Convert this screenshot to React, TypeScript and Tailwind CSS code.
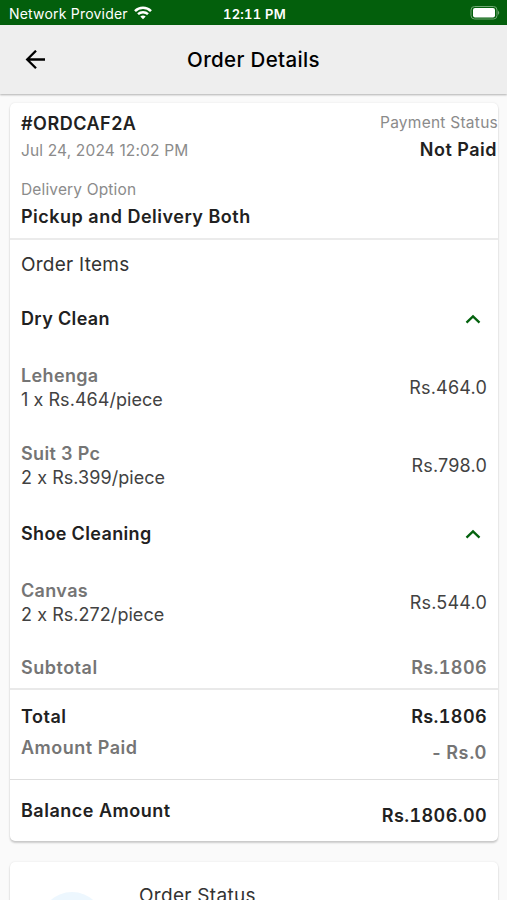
import type { ReactNode } from 'react';

type Item = { name: string; detail: string; price: string };

function StatusBar() {
  return (
    <div className="grid h-[25px] grid-cols-[1fr_auto_1fr] items-center bg-[#035f0c] pt-[3px] pr-[7px] pl-[9px] text-white">
      <div className="flex items-center gap-[6px]">
        <span className="text-[14px] leading-5 tracking-[0.2px] whitespace-nowrap">Network Provider</span>
        <svg className="-mt-[2px] h-[14px] w-[18px]" viewBox="0 0 18 14" fill="none" stroke="currentColor" strokeWidth="2.5">
          <path d="M1 5.1 C5.4 .7 12.6 .7 17 5.1" />
          <path d="M4 8.2 C6.8 5.6 11.2 5.6 14 8.2" />
          <path d="M6.3 10.5 Q9 8.3 11.7 10.5 L9 13.2 Z" fill="currentColor" stroke="none" />
        </svg>
      </div>
      <span className="text-[13px] leading-5 font-semibold tracking-[0.25px] tabular-nums">12:11 PM</span>
      <svg className="-mt-[2px] h-[14px] w-[30px] justify-self-end" viewBox="0 0 30 14" fill="none">
        <rect x="1" y=".5" width="26" height="12.5" rx="3.5" stroke="#70a873" />
        <rect x="3" y="2" width="22" height="9.5" rx="2" fill="white" />
        <path d="M28 4.5 Q30.5 6.8 28 9Z" fill="#70a873" />
      </svg>
    </div>
  );
}

function Header() {
  return (
    <header className="grid h-[69px] grid-cols-[1fr_auto_1fr] items-center bg-[#eeeeee] px-[25px] text-black shadow-[0_1px_2px_rgba(0,0,0,0.3)]">
      <svg className="h-5 w-[21px]" viewBox="0 0 21 20" fill="none" stroke="currentColor" strokeWidth="2.3">
        <path d="M20 9.5H2.5M11 .7L2.2 9.5L11 18.3" />
      </svg>
      <h1 className="text-[20.5px] leading-7 font-medium tracking-[0.35px]">Order Details</h1>
    </header>
  );
}

function Section({ title }: { title: string }) {
  return (
    <div className="flex h-6 items-center justify-between pr-[6px]">
      <h2 className="text-[18px] leading-6 font-semibold tracking-[0.35px]">{title}</h2>
      <svg className="-mt-[1px] h-[10px] w-[16px]" viewBox="0 0 16 10" fill="none" stroke="#04620e" strokeWidth="2.3">
        <path d="M1.5 8.6L8 2.3L14.5 8.6" />
      </svg>
    </div>
  );
}

function ItemRow({ item }: { item: Item }) {
  return (
    <div className="flex items-center justify-between text-[18px] leading-6 text-[#424242]">
      <div>
        <p className="font-semibold tracking-[0.35px] text-[#757575]">{item.name}</p>
        <p className="tracking-[0.05px]">{item.detail}</p>
      </div>
      <span className="tracking-[0.2px]">{item.price}</span>
    </div>
  );
}

function Amount({ label, children, className }: { label: string; children: ReactNode; className: string }) {
  return (
    <div className={`flex justify-between text-[18px] leading-6 font-semibold tracking-[0.5px] ${className}`}>
      <span>{label}</span>
      {children}
    </div>
  );
}

export default function App() {
  return (
    <div className="h-[900px] overflow-hidden bg-[#fafafa] font-[Inter,sans-serif] text-[#212121]">
      <StatusBar />
      <Header />
      <main className="flex flex-col gap-[21px] pt-[9px] pr-[9px] pl-[10px]">
        <article className="h-[738px] rounded-[5px] bg-white shadow-[0_2px_2px_rgba(0,0,0,0.18),0_0_2px_rgba(0,0,0,0.1)]">
          <section className="flex h-[137px] justify-between border-b-2 border-[#ebebeb] pl-[11px]">
            <div>
              <p className="mt-[9px] text-[18px] leading-6 font-semibold tracking-[0.5px]">#ORDCAF2A</p>
              <p className="mt-[3px] text-[15.5px] leading-6 tracking-[0.15px] text-[#8b8b8b]">Jul 24, 2024 12:02 PM</p>
              <p className="mt-[15px] text-[15.5px] leading-6 tracking-[0.15px] text-[#8b8b8b]">Delivery Option</p>
              <p className="mt-[3px] text-[18px] leading-6 font-semibold tracking-[0.5px]">Pickup and Delivery Both</p>
            </div>
            <div className="text-right">
              <p className="mt-[8px] text-[15.5px] leading-6 tracking-[0.25px] text-[#8b8b8b]">Payment Status</p>
              <p className="mt-[3px] pr-[1px] text-[18px] leading-6 font-semibold tracking-[0.5px]">Not Paid</p>
            </div>
          </section>
          <section className="h-[450px] border-b-2 border-[#e9e9e9] pt-[13px] pr-[11px] pl-[11px]">
            <h2 className="mb-[30px] text-[19px] leading-6 tracking-[0.25px] text-[#333333]">Order Items</h2>
            <Section title="Dry Clean" />
            <div className="mt-[33px] mb-[32px] flex flex-col gap-[30px]">
              <ItemRow item={{ name: 'Lehenga', detail: '1 x Rs.464/piece', price: 'Rs.464.0' }} />
              <ItemRow item={{ name: 'Suit 3 Pc', detail: '2 x Rs.399/piece', price: 'Rs.798.0' }} />
            </div>
            <Section title="Shoe Cleaning" />
            <div className="mt-[33px] mb-[29px]">
              <ItemRow item={{ name: 'Canvas', detail: '2 x Rs.272/piece', price: 'Rs.544.0' }} />
            </div>
            <Amount label="Subtotal" className="text-[#757575]"><span className="tracking-[0.4px] tabular-nums">Rs.1806</span></Amount>
          </section>
          <section className="h-[90px] border-b border-[#dedede] pt-[15px] pr-[11px] pl-[11px]">
            <Amount label="Total" className=""><span className="tracking-[0.4px] tabular-nums">Rs.1806</span></Amount>
            <Amount label="Amount Paid" className="mt-[7px] text-[#757575]"><span className="mt-[5px]">- Rs.0</span></Amount>
          </section>
          <section className="pt-[19px] pr-[11px] pl-[11px]">
            <Amount label="Balance Amount" className=""><span className="mt-[5px] tracking-[0.4px] tabular-nums">Rs.1806.00</span></Amount>
          </section>
        </article>
        <article className="flex h-[120px] rounded-[5px] bg-white pt-[22px] pl-[30px] shadow-[0_2px_2px_rgba(0,0,0,0.18),0_0_2px_rgba(0,0,0,0.1)]">
          <div className="mt-[8px] size-[64px] rounded-full bg-[#edf7fe]" />
          <h2 className="ml-[35px] text-[19px] leading-6 tracking-[0.3px] text-[#333333]">Order Status</h2>
        </article>
      </main>
    </div>
  );
}
